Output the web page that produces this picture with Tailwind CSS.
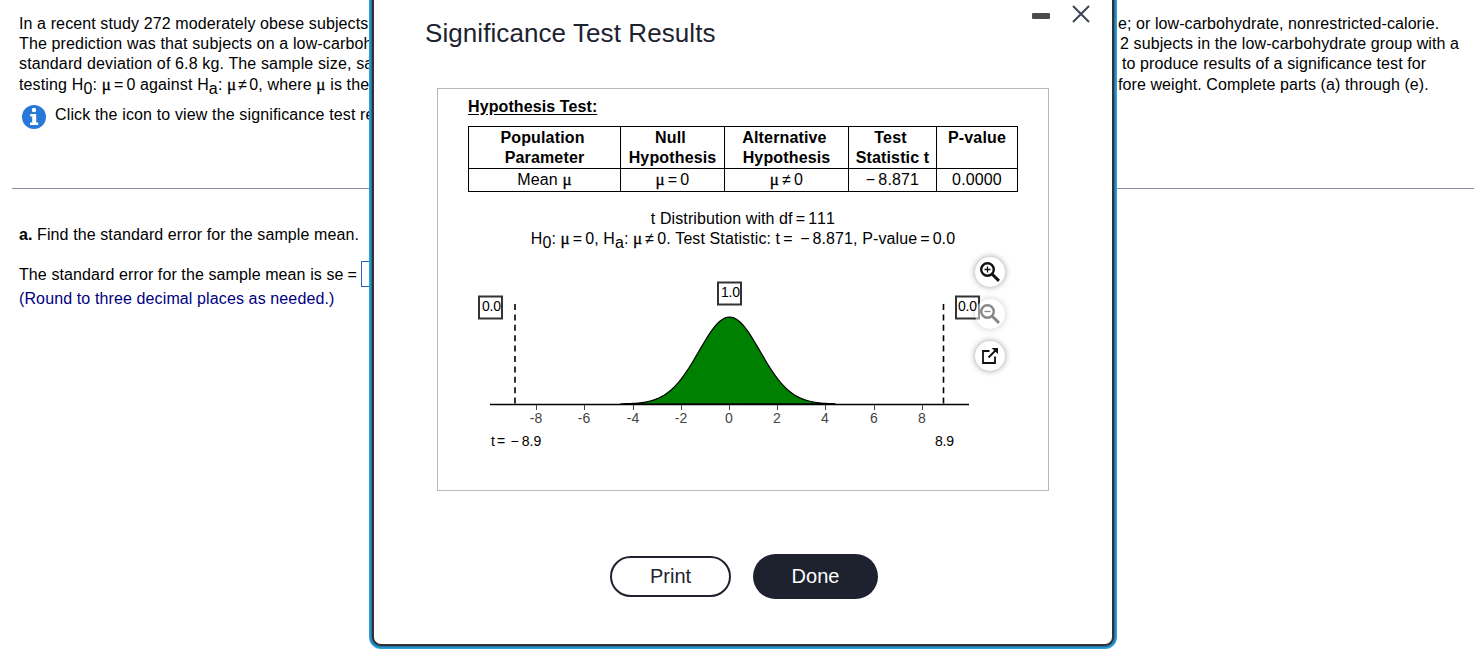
<!DOCTYPE html>
<html lang="en">
<head>
    <meta charset="UTF-8">
    <meta name="viewport" content="width=device-width, initial-scale=1.0">
    <title>Significance Test Results</title>
    <script src="https://cdn.jsdelivr.net/npm/@tailwindcss/browser@4"></script>
</head>
<body class="relative h-[662px] overflow-hidden bg-white font-['Liberation_Sans',Arial,sans-serif] text-[16px] leading-[20px] text-black">
    <!-- Question -->
    <div class="flex justify-between whitespace-nowrap pl-[19px] pt-[14px]">
        <div class="w-[352px]">
            <p class="tracking-[0.11px]">In a recent study 272 moderately obese subjects</p>
            <p class="tracking-[0.14px]">The prediction was that subjects on a low-carboh</p>
            <p class="tracking-[0.14px]">standard deviation of 6.8 kg. The sample size, sa</p>
            <p class="h-[25px] pt-px tracking-[0.14px]">testing H<span class="relative top-[4px]">0</span>: <span class="font-['Liberation_Serif',serif] text-[17px] [-webkit-text-stroke:0.3px]">μ</span><span class="mx-[3px]">=</span>0 against H<span class="relative top-[4px]">a</span>: <span class="font-['Liberation_Serif',serif] text-[17px] [-webkit-text-stroke:0.3px]">μ</span><span class="mx-[2px]">≠</span>0, where <span class="font-['Liberation_Serif',serif] text-[17px] [-webkit-text-stroke:0.3px]">μ</span> is the</p>
        </div>
        <div class="w-[363px]">
            <p class="tracking-[0.08px]">e; or low-carbohydrate, nonrestricted-calorie.</p>
            <p class="pl-[2px] tracking-[0.1px]">2 subjects in the low-carbohydrate group with a</p>
            <p class="pl-[4px] tracking-[0.1px]">to produce results of a significance test for</p>
            <p class="pt-px tracking-[0.09px]">fore weight. Complete parts (a) through (e).</p>
        </div>
    </div>
    <div class="flex items-start gap-[9px] whitespace-nowrap pl-[22px] pt-[6px]">
        <svg class="h-[24px] w-[24px]" viewBox="0 0 24 24">
            <circle cx="12" cy="12" r="12" fill="#2878d8"/>
            <circle cx="12" cy="5" r="2.2" fill="#fff"/>
            <path d="M8.2 9h6v8.5h2v2.5H8v-2.5h2.2v-6H8.2z" fill="#fff"/>
        </svg>
        <p class="w-[316px] tracking-[0.14px]">Click the icon to view the significance test re</p>
    </div>
    <hr class="ml-[12px] mr-[7px] mt-[59px] border-t border-[#8790a3]">
    <div class="whitespace-nowrap pl-[19px] pt-[36px]">
        <p class="tracking-[0.1px]"><b>a.</b> Find the standard error for the sample mean.</p>
        <div class="mt-[16px] flex h-[28px] items-center tracking-[0.1px]">The standard error for the sample mean is se<span class="ml-[4px]">=</span><span class="-mt-[2px] ml-[4px] h-[26px] w-[60px] border border-[#2a62c4]"></span></div>
        <p class="text-[#000080] tracking-[0.12px]">(Round to three decimal places as needed.)</p>
    </div>

    <!-- Results dialog -->
    <div class="absolute left-[372px] top-0 flex h-[646px] w-[742px] flex-col rounded-b-[9px] border-2 border-t-0 border-[#303236] bg-white shadow-[0_0_0_1px_#287096,0_0_0_2px_#1e93d0,0_0_0_3px_#2d9fd8]">
        <div class="flex h-[88px] items-start justify-between pl-[51px] pr-[22px]">
            <h1 class="pt-[18px] text-[26px] leading-[30px] tracking-[0.08px] text-[#1c222e]">Significance Test Results</h1>
            <div class="flex items-start gap-[22px]">
                <span class="mt-[13px] h-[6px] w-[18px] rounded-[1px] bg-[#4c4c4e]"></span>
                <svg class="mt-[5px] h-[18px] w-[18px]" viewBox="0 0 18 18" fill="none" stroke="#3d4653" stroke-width="2"><path d="M1 1l16 16M17 1L1 17"/></svg>
            </div>
        </div>
        <div class="relative ml-[63px] h-[403px] w-[612px] border border-[#b8b8b8] pl-[30px] pt-[8px]">
            <h2 class="font-bold tracking-[0.1px] underline underline-offset-2">Hypothesis Test:</h2>
            <table class="mt-[9px] w-[550px] table-fixed border-collapse text-center tracking-[0.15px]">
                <colgroup><col class="w-[152px]"><col class="w-[104px]"><col class="w-[124px]"><col class="w-[88px]"><col class="w-[81px]"></colgroup>
                <tr class="h-[42px] align-top font-bold">
                    <td class="border border-black pt-px"><span class="pr-1">Population</span><br>Parameter</td>
                    <td class="border border-black pt-px"><span class="pr-1">Null</span><br>Hypothesis</td>
                    <td class="border border-black pt-px"><span class="pr-1">Alternative</span><br>Hypothesis</td>
                    <td class="border border-black pt-px"><span class="pr-1">Test</span><br>Statistic t</td>
                    <td class="border border-black pt-px">P-value</td>
                </tr>
                <tr class="h-[23px] align-top">
                    <td class="border border-black pt-px">Mean <span class="font-['Liberation_Serif',serif] text-[17px] [-webkit-text-stroke:0.3px]">μ</span></td>
                    <td class="border border-black pt-px"><span class="font-['Liberation_Serif',serif] text-[17px] [-webkit-text-stroke:0.3px]">μ</span><span class="mx-[3px]">=</span>0</td>
                    <td class="border border-black pt-px"><span class="font-['Liberation_Serif',serif] text-[17px] [-webkit-text-stroke:0.3px]">μ</span><span class="mx-[3px]">≠</span>0</td>
                    <td class="border border-black pt-px">−<span class="pl-[3px]">8.871</span></td>
                    <td class="border border-black pt-px">0.0000</td>
                </tr>
            </table>
            <div class="mt-[17px] w-[550px] whitespace-nowrap text-center tracking-[0.1px]">
                <p>t Distribution with df<span class="mx-[3px]">=</span><span class="[font-kerning:none]">111</span></p>
                <p class="h-[20px]">H<span class="relative top-[4px]">0</span>: <span class="font-['Liberation_Serif',serif] text-[17px] [-webkit-text-stroke:0.3px]">μ</span><span class="mx-[3px]">=</span>0, H<span class="relative top-[4px]">a</span>: <span class="font-['Liberation_Serif',serif] text-[17px] [-webkit-text-stroke:0.3px]">μ</span><span class="mx-[3px]">≠</span>0. Test Statistic: t<span class="ml-[3px]">=</span> <span class="mx-[3px]">−</span>8.871, P-value<span class="mx-[3px]">=</span>0.0</p>
            </div>
            <!-- t distribution -->
            <svg class="mt-[21px] h-[190px] w-[550px]" viewBox="468 270 550 190" font-size="14">
                <g fill="#fff" stroke="#333" stroke-width="2">
                    <rect x="479" y="296.5" width="23" height="22"/>
                    <rect x="718" y="282.5" width="23" height="22"/>
                    <rect x="956" y="296.5" width="23" height="22"/>
                </g>
                <g fill="#000">
                    <text x="482" y="311" textLength="19">0.0</text>
                    <text x="721" y="297" textLength="19">1.0</text>
                    <text x="958" y="311" textLength="19">0.0</text>
                    <text x="491" y="446">t<tspan dx="2">=</tspan><tspan dx="5.5">−</tspan><tspan dx="3">8.9</tspan></text>
                    <text x="935" y="446" textLength="19">8.9</text>
                </g>
                <path d="M515 304V404M943.5 304V404" stroke="#000" stroke-width="1.6" stroke-dasharray="6 4.4" fill="none"/>
                <path id="curve" fill="#008000" stroke="#000" stroke-width="1.2"/>
                <path d="M490 404.5H969" stroke="#000" stroke-width="1.4"/>
                <g id="ticks" fill="#444" text-anchor="middle"></g>
            </svg>
            <!-- Graph tools -->
            <div class="absolute left-[537px] top-[168px] flex flex-col gap-[12px]">
                <span class="flex h-[30px] w-[30px] items-center justify-center rounded-full bg-white shadow-[0_0_6px_#00000066]">
                    <svg class="h-[20px] w-[20px]" viewBox="0 0 20 20" fill="none" stroke="#111"><circle cx="7.5" cy="7.5" r="6.3" stroke-width="2.4"/><path d="M4.5 7.5h6M7.5 4.5v6" stroke-width="1.3"/><path d="M12 12l7 6.8" stroke-width="3"/></svg>
                </span>
                <span class="flex h-[30px] w-[30px] items-center justify-center rounded-full bg-white opacity-50 shadow-[0_0_6px_#00000066]">
                    <svg class="h-[20px] w-[20px]" viewBox="0 0 20 20" fill="none" stroke="#111"><circle cx="7.5" cy="7.5" r="6.3" stroke-width="2.4"/><path d="M4.5 7.5h6" stroke-width="1.3"/><path d="M12 12l7 6.8" stroke-width="3"/></svg>
                </span>
                <span class="flex h-[30px] w-[30px] items-center justify-center rounded-full bg-white shadow-[0_0_6px_#00000066]">
                    <svg class="h-[16px] w-[16px]" viewBox="0 0 16 16" fill="none" stroke="#111" stroke-width="1.8"><path d="M7.5 3H1v12h12V8.5M6.5 9.5l7-7"/><path d="M9.5 0H16v6z" fill="#111" stroke="none"/></svg>
                </span>
            </div>
        </div>
        <div class="flex items-center gap-[22px] pl-[236px] pt-[63px] text-[20px]">
            <button class="h-[41px] w-[121px] rounded-full border-2 border-[#1d222e] pb-px text-[#1d222e]">Print</button>
            <button class="h-[45px] w-[125px] rounded-full bg-[#1d222e] pb-px text-white">Done</button>
        </div>
    </div>

    <script>
        const cx = 729.5, unit = 24.1, base = 404, height = 87;
        let d = `M${cx - 4.5 * unit} ${base}`;
        for (let t = -4.5; t <= 4.5; t += 0.1) {
            d += `L${(cx + t * unit).toFixed(2)} ${(base - height * Math.exp(-t * t / 3.22)).toFixed(2)}`;
        }
        document.getElementById('curve').setAttribute('d', d + 'Z');

        let ticks = '';
        for (let t = -8; t <= 8; t += 2) {
            const x = Math.round(cx + t * unit - 0.5) + 0.5;
            ticks += `<path d="M${x} 405v5" stroke="#444"/><text x="${x - 0.5}" y="423">${t}</text>`;
        }
        document.getElementById('ticks').innerHTML = ticks;
    </script>
</body>
</html>
